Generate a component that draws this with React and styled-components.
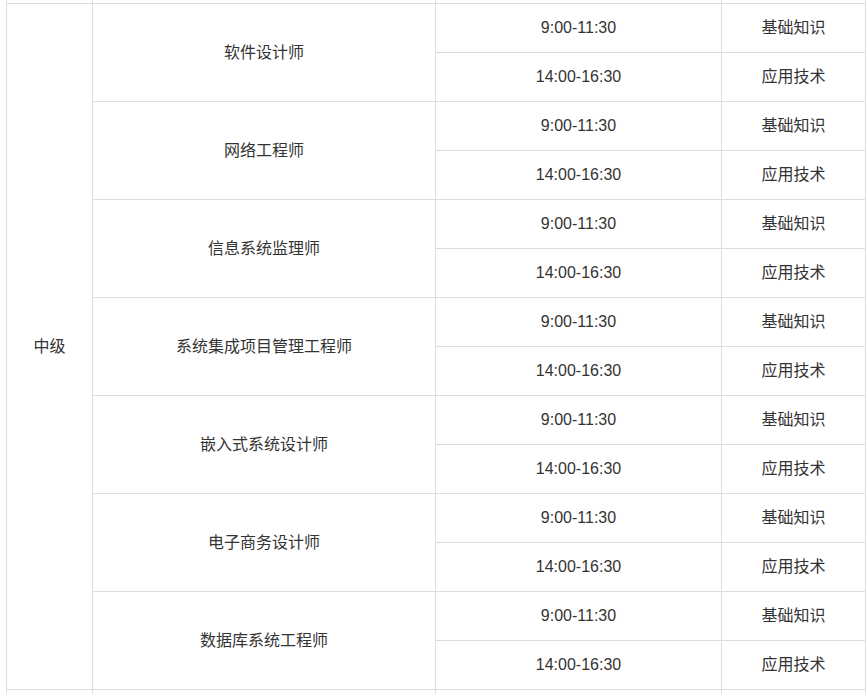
import React from "react";
import styled, { createGlobalStyle } from "styled-components";

const GlobalStyle = createGlobalStyle`
  html, body {
    margin: 0;
    padding: 0;
    background: #fff;
  }
  body {
    font-family: "Liberation Sans", "Noto Sans CJK SC", sans-serif;
    color: #333;
    overflow: hidden;
  }
`;

const Page = styled.div`
  width: 868px;
  height: 694px;
  overflow: hidden;
  padding-left: 6px;
  box-sizing: border-box;
`;

const Table = styled.table`
  border-collapse: collapse;
  table-layout: fixed;
  width: 859px;
  font-size: 16px;
`;

const Cell = styled.td`
  border: 1px solid #dddddd;
  height: 48px;
  padding: 0;
  text-align: center;
  vertical-align: middle;
  line-height: 20px;
`;

const SpacerCell = styled.td`
  border-left: 1px solid #dddddd;
  border-right: 1px solid #dddddd;
  border-top: none;
  border-bottom: none;
  padding: 0;
  height: ${(p) => p.$h}px;
  line-height: 0;
  font-size: 0;
`;

const exams = [
  "软件设计师",
  "网络工程师",
  "信息系统监理师",
  "系统集成项目管理工程师",
  "嵌入式系统设计师",
  "电子商务设计师",
  "数据库系统工程师",
];

const Spacer = ({ h }) => (
  <tr>
    <SpacerCell $h={h} />
    <SpacerCell $h={h} />
    <SpacerCell $h={h} />
    <SpacerCell $h={h} />
  </tr>
);

export default function App() {
  return (
    <Page>
      <GlobalStyle />
      <Table>
        <colgroup>
          <col style={{ width: 86 }} />
          <col style={{ width: 343 }} />
          <col style={{ width: 286 }} />
          <col style={{ width: 144 }} />
        </colgroup>
        <tbody>
          <Spacer h={3} />
          {exams.map((name, i) => (
            <React.Fragment key={name}>
              <tr>
                {i === 0 && <Cell rowSpan={exams.length * 2}>中级</Cell>}
                <Cell rowSpan={2}>{name}</Cell>
                <Cell>9:00-11:30</Cell>
                <Cell>基础知识</Cell>
              </tr>
              <tr>
                <Cell>14:00-16:30</Cell>
                <Cell>应用技术</Cell>
              </tr>
            </React.Fragment>
          ))}
          <Spacer h={10} />
        </tbody>
      </Table>
    </Page>
  );
}
